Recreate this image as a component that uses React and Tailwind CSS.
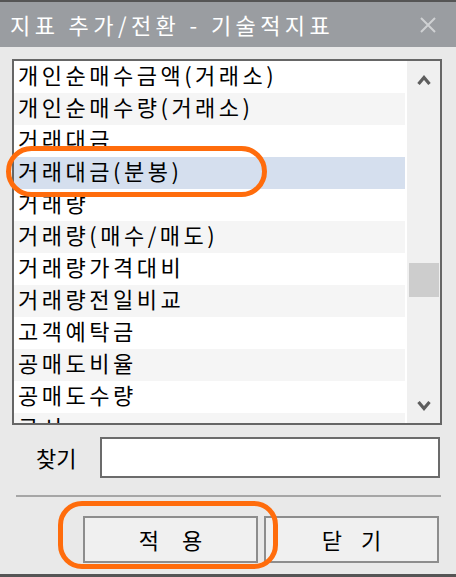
import React from "react";

const items = [
  "개인순매수금액(거래소)",
  "개인순매수량(거래소)",
  "거래대금",
  "거래대금(분봉)",
  "거래량",
  "거래량(매수/매도)",
  "거래량가격대비",
  "거래량전일비교",
  "고객예탁금",
  "공매도비율",
  "공매도수량",
  "공시",
  "기관순매수",
];

const SELECTED = 3;

export default function App() {
  return (
    <div
      className="relative w-[456px] h-[577px] overflow-hidden bg-[#e9e9e9] text-black"
      style={{ fontFamily: '"Noto Sans CJK KR", "Noto Sans", sans-serif' }}
    >
      {/* title bar */}
      <div className="h-[47px] border-t-2 border-[#555555] bg-[#9a9da1] flex items-center justify-between pl-[10px] pr-[20px]">
        <span className="text-white text-[22px] tracking-[4.4px] leading-normal">
          지표 추가/전환 - 기술적지표
        </span>
        <svg width="16" height="16" viewBox="0 0 16 16">
          <path d="M1 1 L15 15 M15 1 L1 15" stroke="#cfd1d3" strokeWidth="2" />
        </svg>
      </div>

      {/* list */}
      <div className="mt-[12px] ml-[12px] w-[430px] h-[366px] border-2 border-[#666666] bg-white flex">
        <div className="w-[391px] overflow-hidden">
          {items.map((name, i) => (
            <ListRow key={name} name={name} index={i} />
          ))}
        </div>
        <div className="ml-[2px] w-[33px] bg-[#f0f0f0] flex flex-col items-center">
          <svg className="mt-[12px]" width="14" height="12" viewBox="0 0 14 12">
            <path d="M1.5 11 L7 4.5 L12.5 11" fill="none" stroke="#5e5e5e" strokeWidth="3.2" />
          </svg>
          <div className="mt-[178px] w-[30px] h-[34px] bg-[#cdcdcd]" />
          <svg className="mt-[104px]" width="14" height="12" viewBox="0 0 14 12">
            <path d="M1.5 1 L7 7.5 L12.5 1" fill="none" stroke="#5e5e5e" strokeWidth="3.2" />
          </svg>
        </div>
      </div>

      {/* search */}
      <div className="mt-[12px] ml-[12px] mr-[16px] flex items-center">
        <span className="w-[88px] pl-[24px] text-[22px] leading-normal">찾기</span>
        <div className="flex-1 h-[41px] border-2 border-[#6b6b6b] bg-white" />
      </div>

      <div className="mt-[17px] ml-[16px] mr-[15px] h-[2px] bg-[#a6a6a6]" />

      {/* buttons */}
      <div className="mt-[19px] pr-[17px] flex justify-end gap-[6px]">
        <button className="w-[175px] h-[47px] border-2 border-[#8d8d8d] bg-[#f0f0f0] text-[22px] leading-normal [word-spacing:18px]">
          적 용
        </button>
        <button className="w-[175px] h-[47px] border-2 border-[#8d8d8d] bg-[#f0f0f0] text-[22px] leading-normal [word-spacing:14px]">
          닫 기
        </button>
      </div>

      <div className="mt-[11px] h-[3px] bg-[#555555]" />

      {/* orange highlight marks */}
      <div className="absolute left-[6px] top-[146px] w-[261px] h-[51px] rounded-[26px] border-[5px] border-[#ff6c0c]" />
      <div className="absolute left-[58px] top-[501px] w-[220px] h-[68px] rounded-[24px] border-[5px] border-[#ff6c0c]" />
    </div>
  );
}

function ListRow({ name, index }) {
  const bg =
    index === SELECTED ? "bg-[#d5dfee]" : index % 2 === 1 ? "bg-[#f5f5f5]" : "bg-white";
  return (
    <div className={`h-[32px] pl-[4px] text-[22px] leading-[26px] tracking-[3.5px] whitespace-nowrap ${bg}`}>
      {name}
    </div>
  );
}
